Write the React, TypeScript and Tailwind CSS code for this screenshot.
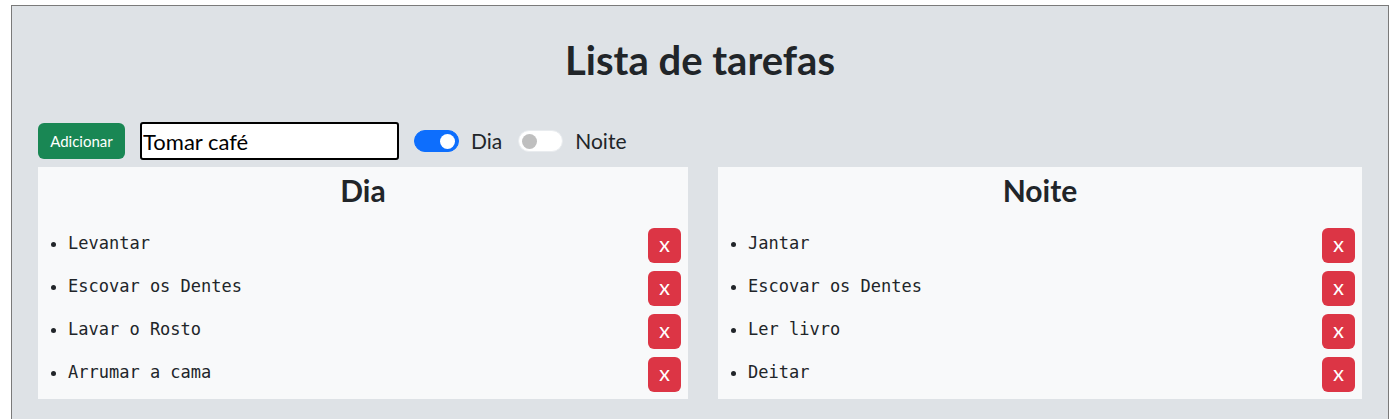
import React, { useState } from "react";

const DIA = ["Levantar", "Escovar os Dentes", "Lavar o Rosto", "Arrumar a cama"];
const NOITE = ["Jantar", "Escovar os Dentes", "Ler livro", "Deitar"];

const Toggle = ({ on, label }: { on: boolean; label: string }) => (
  <label className="flex items-center gap-[12px] text-[21px] text-[#212529]">
    <span
      className={`flex h-[22px] w-[45px] items-center rounded-full border px-[3px] ${
        on ? "justify-end border-[#0d6efd] bg-[#0d6efd]" : "justify-start border-[#e9ecef] bg-white"
      }`}
    >
      <span className={`h-[15px] w-[15px] rounded-full ${on ? "bg-white" : "bg-[#bfbfbf]"}`} />
    </span>
    {label}
  </label>
);

const Panel = ({ title, items }: { title: string; items: string[] }) => (
  <div className="bg-[#f8f9fa] pt-[5px] pb-[7px]">
    <h2 className="text-center text-[30px] font-bold leading-[36px] text-[#212529]">{title}</h2>
    <ul className="mt-[20px] list-disc pl-[30px] pr-[7px] text-[#212529]">
      {items.map((item, i) => (
        <li key={i} className="mb-[8px] last:mb-0">
          <div className="flex items-start justify-between">
            <span className="pt-[3px] font-['DejaVu_Sans_Mono',monospace] text-[17px] leading-[24px]">{item}</span>
            <button className="h-[35px] w-[33px] rounded-[6px] bg-[#dc3545] text-[16px] font-semibold text-white">X</button>
          </div>
        </li>
      ))}
    </ul>
  </div>
);

export default function App() {
  const [text, setText] = useState("Tomar café");
  return (
    <div className="min-h-screen bg-white pt-[5px] pl-[11px] pr-[7px] font-['Lato',sans-serif]">
      <div className="border border-[#7a7a7a] bg-[#dee2e6] px-[26px] pb-[40px]">
        <h1 className="pt-[30px] text-center text-[40px] font-bold leading-[48px] text-[#212529]">Lista de tarefas</h1>
        <div className="mt-[38px] flex items-center">
          <button className="h-[36px] w-[87px] rounded-[6px] bg-[#198754] text-[15px] text-white">Adicionar</button>
          <input
            value={text}
            onChange={(e) => setText(e.target.value)}
            className="ml-[15px] h-[38px] w-[259px] rounded-[3px] border-2 border-black bg-white px-[1px] text-[22px] text-black outline-none"
          />
          <div className="ml-[15px] flex items-center gap-[16px]">
            <Toggle on label="Dia" />
            <Toggle on={false} label="Noite" />
          </div>
        </div>
        <div className="mt-[7px] grid grid-cols-[650px_644px] gap-[30px]">
          <Panel title="Dia" items={DIA} />
          <Panel title="Noite" items={NOITE} />
        </div>
      </div>
    </div>
  );
}
